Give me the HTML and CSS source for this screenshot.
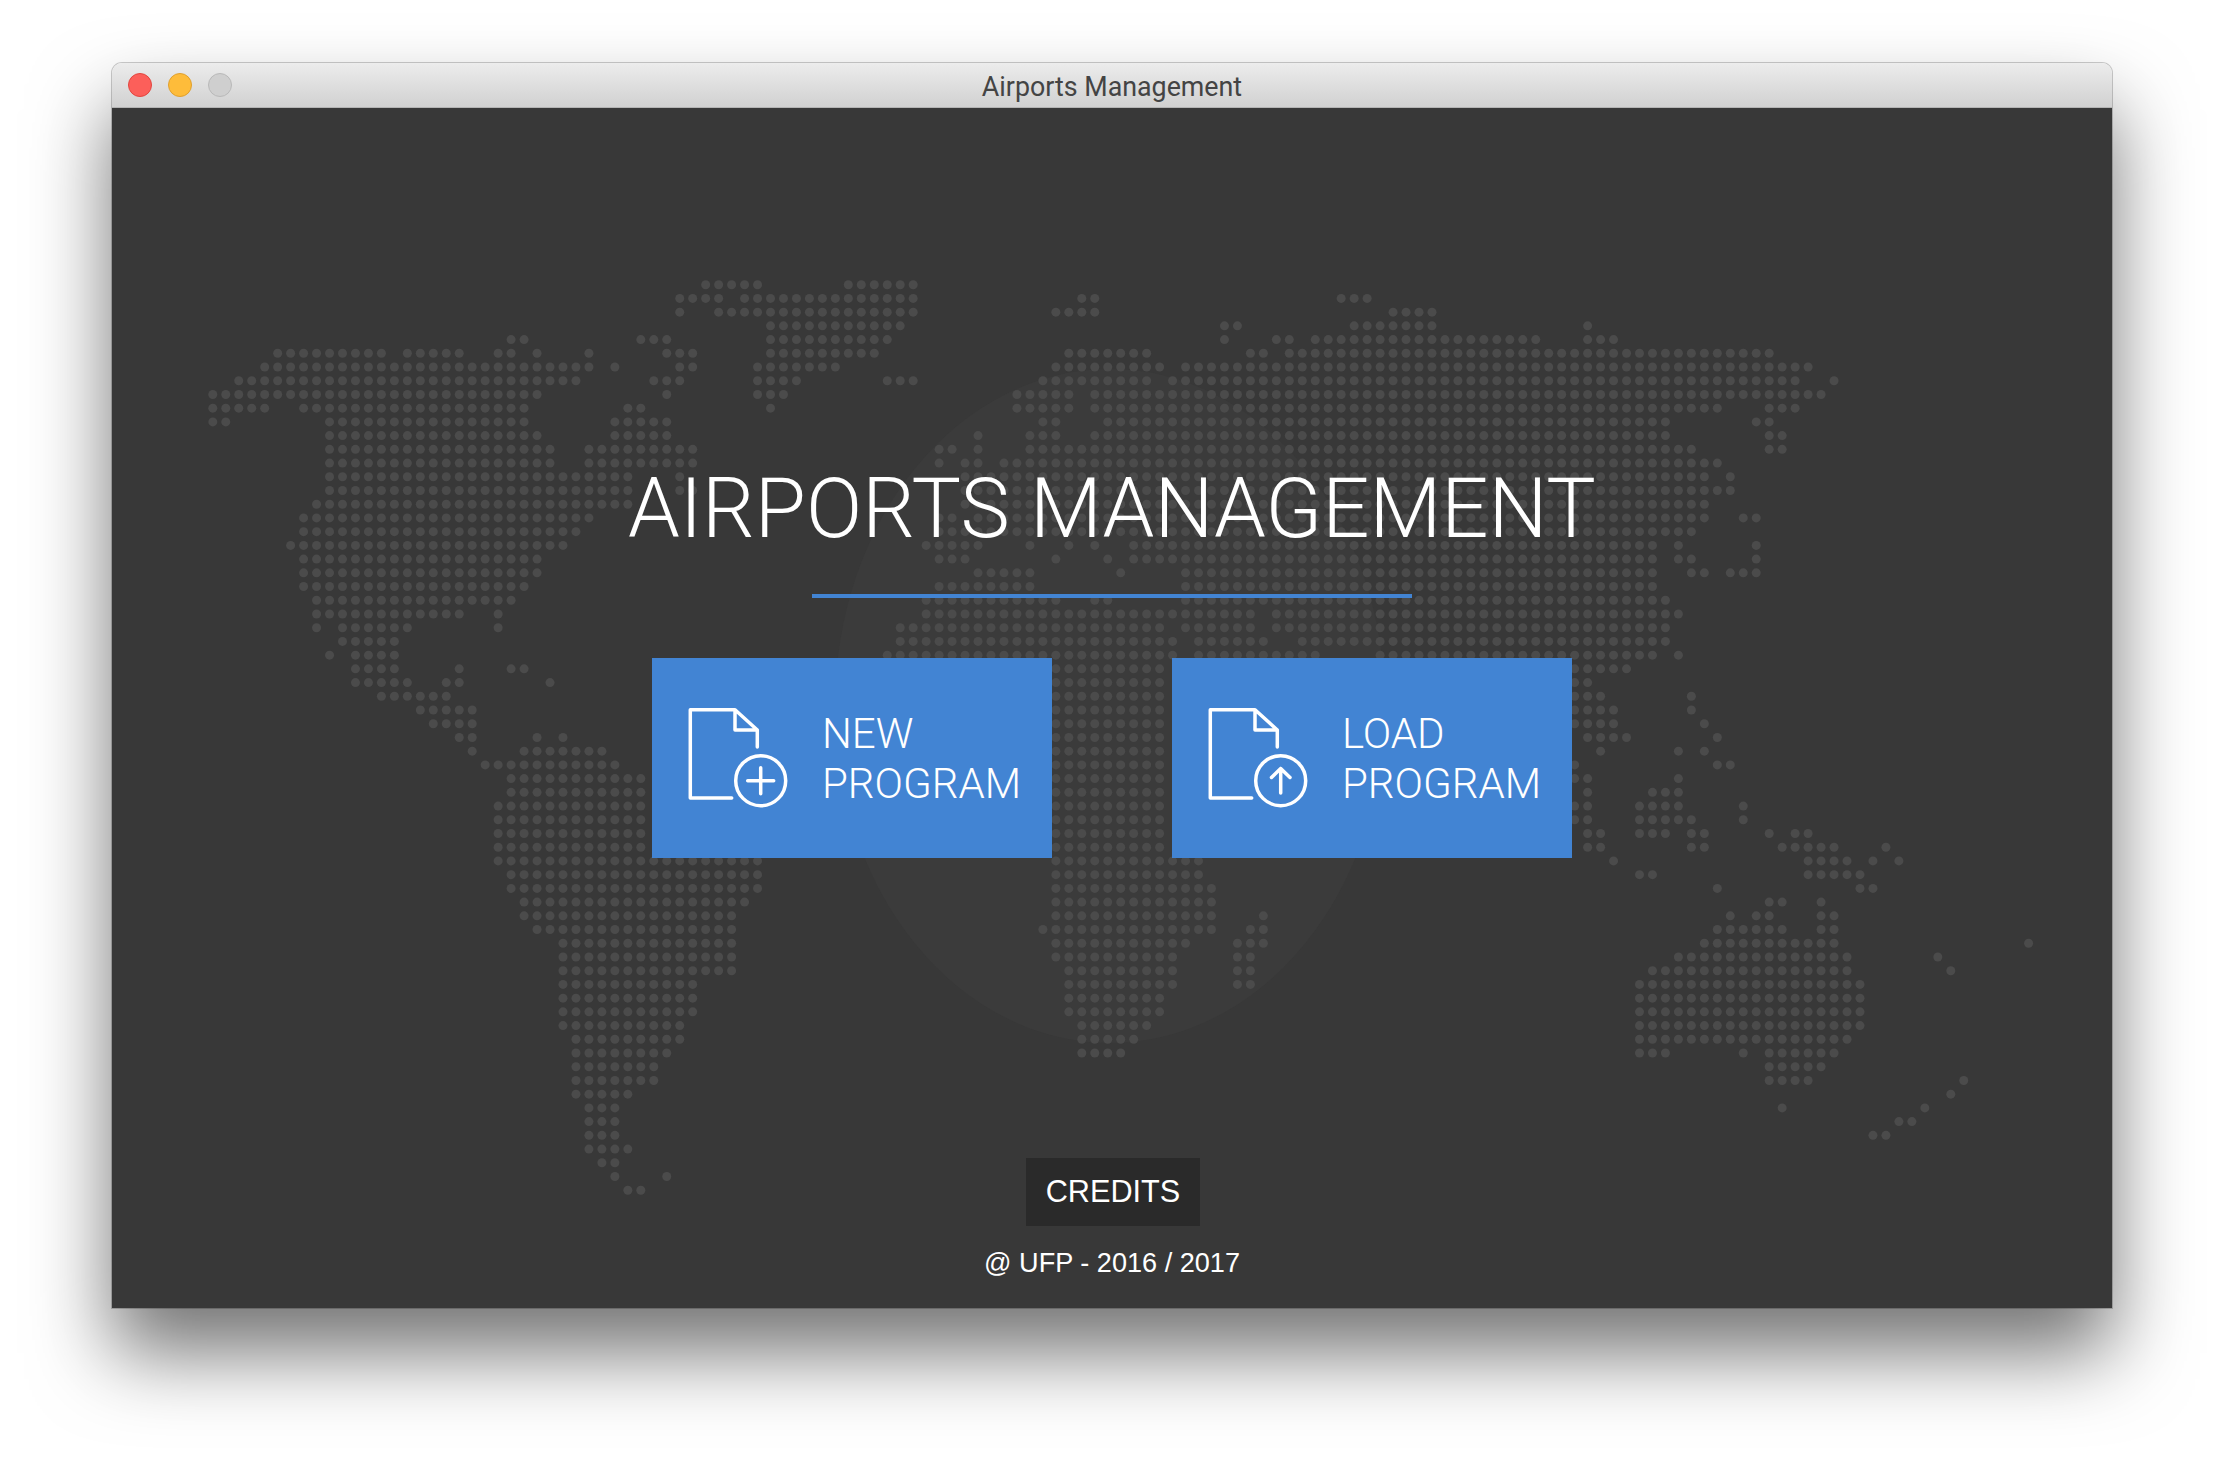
FILE: index.html
```html
<!DOCTYPE html>
<html lang="en">
<head>
    <meta charset="UTF-8">
    <title>Airports Management</title>
    <link rel="stylesheet" href="styles.css">
</head>
<body>
    <div class="window">
        <div class="titlebar">
            <div class="lights">
                <span class="light light-close"></span>
                <span class="light light-min"></span>
                <span class="light light-max"></span>
            </div>
            <div class="window-title">Airports Management</div>
        </div>
        <div class="content">
            <svg id="worldMap" class="world-map" viewBox="112 108 2000 1200"></svg>
            <h1 class="main-title">AIRPORTS MANAGEMENT</h1>
            <div class="title-rule"></div>
            <div class="actions">
                <div class="action">
                    <svg class="action-icon" viewBox="0 0 104 104">
                        <path d="M45.7 92H4.3V3.7H49L71.3 24V41M49 3.7V24H71.3"/>
                        <circle cx="74.7" cy="74.7" r="25"/>
                        <path d="M74.7 61.7V87.7M61.7 74.7H87.7"/>
                    </svg>
                    <div class="action-label">NEW<br>PROGRAM</div>
                </div>
                <div class="action">
                    <svg class="action-icon" viewBox="0 0 104 104">
                        <path d="M45.7 92H4.3V3.7H49L71.3 24V41M49 3.7V24H71.3"/>
                        <circle cx="74.7" cy="74.7" r="25"/>
                        <path d="M74.7 87V62.5M65.5 71.5L74.7 62.5L84 71.5"/>
                    </svg>
                    <div class="action-label">LOAD<br>PROGRAM</div>
                </div>
            </div>
            <div class="credits">CREDITS</div>
            <div class="copyright">@ UFP - 2016 / 2017</div>
        </div>
    </div>
    <script src="map.js"></script>
</body>
</html>
```

FILE: styles.css
```css
* {
    box-sizing: border-box;
    margin: 0;
    padding: 0;
}

body {
    background: white;
    width: 2224px;
    height: 1468px;
    overflow: hidden;
    padding: 63px 112px 0;
    font-family: "Roboto", "Liberation Sans", sans-serif;
}

.window {
    width: 2000px;
    height: 1245px;
    border-radius: 10px 10px 0 0;
    box-shadow: 0 0 0 1px rgba(0,0,0,0.2), 0 45px 80px rgba(0,0,0,0.55);
}

.titlebar {
    height: 45px;
    display: flex;
    align-items: center;
    position: relative;
    background: linear-gradient(#ececec, #d1d1d1);
    border-bottom: 1px solid #b4b4b4;
    border-radius: 10px 10px 0 0;
}

.lights {
    display: flex;
    gap: 16px;
    padding-left: 16px;
}

.light {
    width: 24px;
    height: 24px;
    border-radius: 50%;
    border: 1px solid;
}

.light-close {
    background: #fc5f5a;
    border-color: #e2463f;
}

.light-min {
    background: #febc3a;
    border-color: #e0a02e;
}

.light-max {
    background: #cfcfcf;
    border-color: #b9b9b9;
}

.window-title {
    position: absolute;
    left: 0;
    right: 0;
    top: 8px;
    text-align: center;
    font-size: 26.8px;
    color: #444;
}

.content {
    position: relative;
    height: 1200px;
    background: #383838;
    color: white;
    display: flex;
    flex-direction: column;
    align-items: center;
    padding-top: 353px;
}

.world-map {
    position: absolute;
    top: 0;
    left: 0;
    width: 2000px;
    height: 1200px;
}

.main-title {
    position: relative;
    font-size: 83px;
    font-weight: 300;
    line-height: 96px;
}

.title-rule {
    position: relative;
    width: 600px;
    height: 4px;
    margin-top: 37px;
    background: #4284d3;
}

.actions {
    position: relative;
    display: flex;
    gap: 120px;
    margin-top: 60px;
}

.action {
    width: 400px;
    height: 200px;
    display: flex;
    align-items: center;
    gap: 32px;
    padding-left: 34px;
    background: #4284d3;
}

.action-icon {
    width: 104px;
    height: 104px;
    fill: none;
    stroke: white;
    stroke-width: 3.5;
    stroke-linecap: round;
    stroke-linejoin: round;
}

.action-label {
    padding-top: 2px;
    font-size: 42px;
    font-weight: 300;
    line-height: 50px;
}

.credits {
    position: relative;
    width: 174px;
    height: 68px;
    margin: 300px 0 0 2px;
    background: #2a2a2a;
    font-family: "Liberation Sans", sans-serif;
    font-size: 30.7px;
    line-height: 68px;
    text-align: center;
}

.copyright {
    position: relative;
    margin-top: 19px;
    font-family: "Liberation Sans", sans-serif;
    font-size: 27.1px;
    line-height: 36px;
}
```

FILE: map.js
```js
// dot map: one string per row, column ranges on a fixed grid
var ROWS = [
    "38-42 49-54",
    "36-39 41-54 67-68 87-89",
    "36 39-54 65-68 91-94",
    "43-53 78-79 88-94 106",
    "23-24 33-35 43-52 78 82-83 85-102 106-108",
    "5-13 15-19 22-23 25 29 35-37 43-51 66-72 80-81 83-120",
    "4-29 31 36-37 42-48 65-73 75-123",
    "2-28 34-36 42-45 52-54 64-72 74-122 125",
    "0-25 35 42-44 62-66 68-124",
    "0-4 7-24 32-33 43 62-66 68-116 120-122",
    "0-1 9-24 31-35 64-65 69-112 119-120",
    "9-25 31-35 59 63-65 68-112 120-121",
    "9-26 29-37 56-57 59 63-114 120-121",
    "9-26 29-37 56 58-59 61-116",
    "9-32 36 58-115 117",
    "9-32 36-37 58-117",
    "8-32 58-115",
    "7-29 56-57 59-115 118-119",
    "7-28 56-114",
    "6-27 55-59 63 66 68 71-111 113 119",
    "7-25 56-58 65 69 71-111 113-114 119",
    "7-25 59-63 70 75-111 114-115 117-119",
    "7-24 56-63 75-111",
    "8-23 55-65 68-69 75-112",
    "8-19 22 55-80 82-113",
    "8 10-15 22 53-73 75-80 82-112",
    "10-14 53-74 76-81 84-112",
    "9 11-14 52-74 76-85 90-111 113",
    "11-14 19 23-24 65-73 105-109",
    "11-15 18-19 26 65-73 105-106",
    "13-18 65-73 105-107 114",
    "16-20 65-73 105-108 114",
    "17-20 65-73 105-108 115",
    "19-20 25 27 65-73 106-109 116",
    "20 24-30 65-73 107 113 115",
    "21-31 65-73 105 116-117",
    "23-33 65-73 105-106 113",
    "23-33 65-73 106 111-113",
    "22-33 65-73 105-106 110-113 118",
    "22-33 65-73 105-106 110-114 118",
    "22-33 65-73 106-107 110-112 114-115 120 122-123",
    "22-33 65-73 106-107 114-115 121-125 129",
    "22-42 65-76 108 123-126 128 130",
    "23-42 65-76 110-111 123-127",
    "23-42 65-77 116 127-128",
    "24-41 65-77 120-121 124",
    "24-40 65-77 81 117 119-120 124-125",
    "25-40 64-77 80-81 116-121 124-125",
    "27-40 65-75 79-81 115-125 140",
    "27-40 65-74 79-80 113-126 133",
    "27-40 66-74 79-80 111-126 134",
    "27-37 66-74 79-80 110-127",
    "27-37 66-73 110-127",
    "27-37 66-73 110-127",
    "27-36 67-72 110-127",
    "28-36 67-71 110-126",
    "28-35 67-70 110-112 118 120-125",
    "28-34 120-124",
    "28-34 120-123 135",
    "28-32 134",
    "29-31 121 132",
    "29-31 130-131",
    "29-31 128-129",
    "29-32",
    "30-31",
    "31 35",
    "32-33"
];

var SVG_NS = "http://www.w3.org/2000/svg";
var map = document.getElementById("worldMap");

var globe = document.createElementNS(SVG_NS, "ellipse");
globe.setAttribute("cx", 1110);
globe.setAttribute("cy", 706);
globe.setAttribute("rx", 275);
globe.setAttribute("ry", 337);
globe.setAttribute("fill", "#3b3b3b");
map.appendChild(globe);

ROWS.forEach(function (row, r) {
    row.split(" ").forEach(function (range) {
        var ends = range.split("-");
        var first = Number(ends[0]);
        var last = Number(ends[1] || ends[0]);
        for (var c = first; c <= last; c++) {
            var dot = document.createElementNS(SVG_NS, "circle");
            dot.setAttribute("cx", 212.8 + 12.97 * c);
            dot.setAttribute("cy", 284.7 + 13.72 * r);
            dot.setAttribute("r", 4.5);
            dot.setAttribute("fill", "#4b4b4b");
            map.appendChild(dot);
        }
    });
});
```
